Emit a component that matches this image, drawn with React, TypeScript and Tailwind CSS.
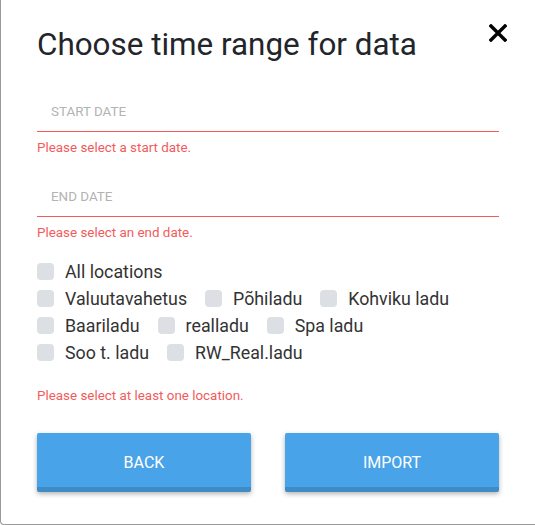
import { useState } from "react";

const rows: string[][] = [
  ["Valuutavahetus", "Põhiladu", "Kohviku ladu"],
  ["Baariladu", "realladu", "Spa ladu"],
  ["Soo t. ladu", "RW_Real.ladu"],
];

function Check({ label }: { label: string }) {
  return (
    <label className="flex items-center gap-[11px] mr-[18px] cursor-pointer">
      <span className="w-[17px] h-[17px] rounded-[4px] bg-[#dcdfe4] shrink-0" />
      <span className="text-[17.8px] leading-[27px] text-[#333]">{label}</span>
    </label>
  );
}

function DateField({ placeholder, error }: { placeholder: string; error: string }) {
  return (
    <div>
      <div className="h-[44px] flex items-center pt-[6px] px-[14px] border-b border-[#f55a5a]">
        <span className="text-[13.4px] uppercase text-[#b3b3b3]">{placeholder}</span>
      </div>
      <p className="mt-[8px] text-[13.4px] leading-[15px] text-[#f25b5b]">{error}</p>
    </div>
  );
}

export default function App() {
  const [open] = useState(true);
  if (!open) return null;

  return (
    <div
      className="relative w-[535px] h-[525px] bg-white border-l border-b border-[#9a9a9a] rounded-bl-[4px] overflow-hidden"
      style={{ fontFamily: "Roboto, 'Liberation Sans', sans-serif" }}
    >
      <button className="absolute top-[24px] right-[28px] w-[18px] h-[18px]">
        <svg viewBox="0 0 18 18" width="18" height="18">
          <path d="M2 2 L16 16 M16 2 L2 16" stroke="#000" strokeWidth="3.4" strokeLinecap="square" />
        </svg>
      </button>

      <div className="px-[36px] pt-[26px]">
        <h2 className="text-[31.4px] leading-[38px] text-[#222529]">Choose time range for data</h2>

        <div className="mt-[24px]">
          <DateField placeholder="Start date" error="Please select a start date." />
        </div>
        <div className="mt-[18px]">
          <DateField placeholder="End date" error="Please select an end date." />
        </div>

        <div className="mt-[18px] flex flex-col">
          <div className="flex">
            <Check label="All locations" />
          </div>
          {rows.map((r, i) => (
            <div key={i} className="flex">
              {r.map((l) => (
                <Check key={l} label={l} />
              ))}
            </div>
          ))}
        </div>

        <p className="mt-[22px] text-[13.4px] leading-[15px] text-[#f25b5b]">
          Please select at least one location.
        </p>

        <div className="mt-[30px] flex justify-between">
          {["Back", "Import"].map((b) => (
            <button
              key={b}
              className="w-[214px] h-[59px] rounded-[2px] bg-[#49a3e8] border-b-[5px] border-[#3f8bc6] shadow-[0_2px_5px_rgba(0,0,0,0.3)] text-white uppercase text-[16px] pt-[5px]"
            >
              {b}
            </button>
          ))}
        </div>
      </div>
    </div>
  );
}
